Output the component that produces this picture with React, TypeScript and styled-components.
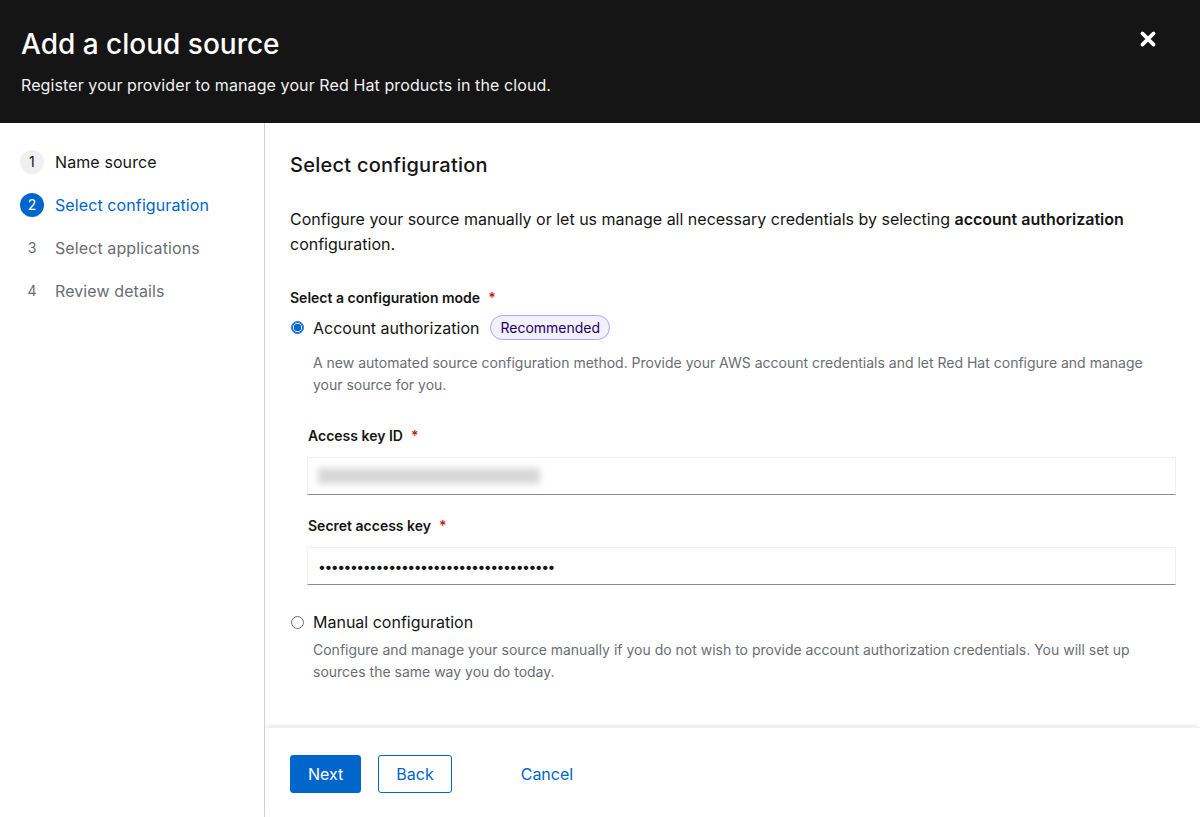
import React from 'react'
import styled, { createGlobalStyle } from 'styled-components'

const GlobalStyle = createGlobalStyle`
  html, body {
    margin: 0;
    padding: 0;
    background: #fff;
  }
  body {
    font-family: 'Inter', 'Noto Sans', sans-serif;
    color: #151515;
    -webkit-font-smoothing: antialiased;
  }
  * {
    box-sizing: border-box;
  }
`

const Page = styled.div`
  height: 817px;
  display: flex;
  flex-direction: column;
  overflow: hidden;
`

const Header = styled.header`
  position: relative;
  background-color: #151515;
  color: #fff;
  height: 123px;
  padding: 26px 21px 0;
  flex-shrink: 0;
`

const Title = styled.h1`
  margin: 0;
  font-size: 28px;
  line-height: 36px;
  font-weight: 500;
`

const Subtitle = styled.p`
  margin: 11px 0 0;
  font-size: 16px;
  line-height: 24px;
  letter-spacing: 0.1px;
  color: #f0f0f0;
`

const CloseButton = styled.button`
  position: absolute;
  top: 29px;
  right: 41px;
  width: 22px;
  height: 22px;
  padding: 0;
  border: none;
  background: transparent;
  color: #fff;
  cursor: pointer;

  & > svg {
    width: 18px;
    height: 18px;
  }
`

const Body = styled.div`
  flex: 1;
  display: flex;
  min-height: 0;
`

const Nav = styled.nav`
  width: 265px;
  flex-shrink: 0;
  border-right: 1px solid #d2d2d2;
  padding: 27px 20px 0;
  display: flex;
  flex-direction: column;
  gap: 19px;
`

type StepState = 'done' | 'current' | 'todo'

const Step = styled.div<{ $state: StepState }>`
  display: flex;
  align-items: center;
  gap: 11px;
  font-size: 16px;
  line-height: 24px;
  letter-spacing: 0.1px;
  color: ${p => (p.$state === 'current' ? '#0066cc' : p.$state === 'done' ? '#151515' : '#6a6e73')};
`

const StepNumber = styled.span<{ $state: StepState }>`
  width: 24px;
  height: 24px;
  border-radius: 50%;
  display: inline-flex;
  align-items: center;
  justify-content: center;
  font-size: 14px;
  background-color: ${p => (p.$state === 'current' ? '#0066cc' : p.$state === 'done' ? '#f0f0f0' : 'transparent')};
  color: ${p => (p.$state === 'current' ? '#fff' : p.$state === 'done' ? '#151515' : '#6a6e73')};
`

const Main = styled.main`
  flex: 1;
  display: flex;
  flex-direction: column;
  min-width: 0;
`

const Content = styled.div`
  flex: 1;
  padding: 29px 24px 0 25px;
`

const Heading = styled.h2`
  margin: 0;
  font-size: 20px;
  line-height: 26px;
  font-weight: 500;
  letter-spacing: 0.25px;
`

const Intro = styled.p`
  margin: 29px 0 0;
  font-size: 16px;
  line-height: 25px;
  color: #151515;

  & > strong {
    font-weight: 600;
  }
`

const GroupLabel = styled.div`
  margin-top: 31px;
  font-size: 14px;
  line-height: 20px;
  font-weight: 600;
`

const Required = styled.span`
  color: #c9190b;
  margin-left: 8px;
  font-weight: 600;
`

const Options = styled.div`
  margin-top: 7px;
`

const RadioRow = styled.label`
  display: flex;
  align-items: center;
  gap: 9px;
  font-size: 16px;
  line-height: 24px;
  cursor: pointer;
`

const RadioDot = styled.span<{ $checked?: boolean }>`
  width: 13px;
  height: 13px;
  margin-left: 1px;
  border-radius: 50%;
  flex-shrink: 0;
  border: 1px solid ${p => (p.$checked ? '#0066cc' : '#6a6e73')};
  background: ${p => (p.$checked ? 'radial-gradient(circle, #0066cc 0 3.5px, #fff 4px)' : '#fff')};
  ${p => p.$checked && 'box-shadow: 0 0 0 1px #0066cc inset;'}
`

const Badge = styled.span`
  margin-left: 2px;
  padding: 1px 9px;
  border-radius: 30px;
  border: 1px solid #b2a3ff;
  background-color: #f2f0fc;
  color: #1f0066;
  font-size: 14px;
  line-height: 21px;
`

const Description = styled.p<{ $gap: number }>`
  margin: ${p => p.$gap}px 0 0 23px;
  font-size: 14px;
  line-height: 22px;
  color: #6a6e73;
`

const Fields = styled.div`
  margin: 30px 0 0 17px;
  display: flex;
  flex-direction: column;
  gap: 21px;
`

const Field = styled.div`
  display: flex;
  flex-direction: column;
  gap: 11px;
`

const FieldLabel = styled.label`
  font-size: 14px;
  line-height: 20px;
  font-weight: 600;
  padding-left: 1px;
`

const Input = styled.div`
  height: 38px;
  border: 1px solid #f0f0f0;
  border-bottom-color: #8a8d90;
  display: flex;
  align-items: center;
  padding: 0 10px;
  font-size: 14px;
  letter-spacing: -1.5px;
  color: #151515;
  overflow: hidden;
`

const Blurred = styled.span`
  display: block;
  width: 222px;
  height: 16px;
  background-color: #d8d8d8;
  filter: blur(3px);
`

const Manual = styled.div`
  margin-top: 25px;
`

const Footer = styled.footer`
  flex-shrink: 0;
  height: 90px;
  padding: 27px 25px;
  display: flex;
  align-items: flex-start;
  gap: 17px;
  box-shadow: 0 -3px 4px -2px rgba(3, 3, 3, 0.12);
  border-top: 1px solid #f0f0f0;
`

type Variant = 'primary' | 'secondary' | 'link'

const Button = styled.button<{ $variant: Variant }>`
  height: 38px;
  padding: 0 17px;
  font-family: inherit;
  font-size: 16px;
  border-radius: 3px;
  cursor: pointer;
  border: 1px solid ${p => (p.$variant === 'link' ? 'transparent' : '#0066cc')};
  background-color: ${p => (p.$variant === 'primary' ? '#0066cc' : 'transparent')};
  color: ${p => (p.$variant === 'primary' ? '#fff' : '#0066cc')};
  ${p => p.$variant === 'link' && 'margin-left: 34px;'}
`

const steps: { n: number; label: string; state: StepState }[] = [
  { n: 1, label: 'Name source', state: 'done' },
  { n: 2, label: 'Select configuration', state: 'current' },
  { n: 3, label: 'Select applications', state: 'todo' },
  { n: 4, label: 'Review details', state: 'todo' }
]

export default function App () {
  return (
    <Page>
      <GlobalStyle />
      <Header>
        <Title>Add a cloud source</Title>
        <Subtitle>Register your provider to manage your Red Hat products in the cloud.</Subtitle>
        <CloseButton aria-label="Close">
          <svg viewBox="0 0 16 16" fill="none" stroke="currentColor" strokeWidth="3.2" strokeLinecap="round">
            <path d="M3 3 L13 13 M13 3 L3 13" />
          </svg>
        </CloseButton>
      </Header>
      <Body>
        <Nav>
          {steps.map(s => (
            <Step key={s.n} $state={s.state}>
              <StepNumber $state={s.state}>{s.n}</StepNumber>
              {s.label}
            </Step>
          ))}
        </Nav>
        <Main>
          <Content>
            <Heading>Select configuration</Heading>
            <Intro>
              Configure your source manually or let us manage all necessary credentials by selecting{' '}
              <strong>account authorization</strong> configuration.
            </Intro>
            <GroupLabel>
              Select a configuration mode<Required>*</Required>
            </GroupLabel>
            <Options>
              <RadioRow>
                <RadioDot $checked />
                Account authorization
                <Badge>Recommended</Badge>
              </RadioRow>
              <Description $gap={12}>
                A new automated source configuration method. Provide your AWS account credentials and let Red Hat configure and manage your source for you.
              </Description>
              <Fields>
                <Field>
                  <FieldLabel>
                    Access key ID<Required>*</Required>
                  </FieldLabel>
                  <Input>
                    <Blurred />
                  </Input>
                </Field>
                <Field>
                  <FieldLabel>
                    Secret access key<Required>*</Required>
                  </FieldLabel>
                  <Input>{'•'.repeat(37)}</Input>
                </Field>
              </Fields>
            </Options>
            <Manual>
              <RadioRow>
                <RadioDot />
                Manual configuration
              </RadioRow>
              <Description $gap={5}>
                Configure and manage your source manually if you do not wish to provide account authorization credentials. You will set up sources the same way you do today.
              </Description>
            </Manual>
          </Content>
          <Footer>
            <Button $variant="primary">Next</Button>
            <Button $variant="secondary">Back</Button>
            <Button $variant="link">Cancel</Button>
          </Footer>
        </Main>
      </Body>
    </Page>
  )
}
